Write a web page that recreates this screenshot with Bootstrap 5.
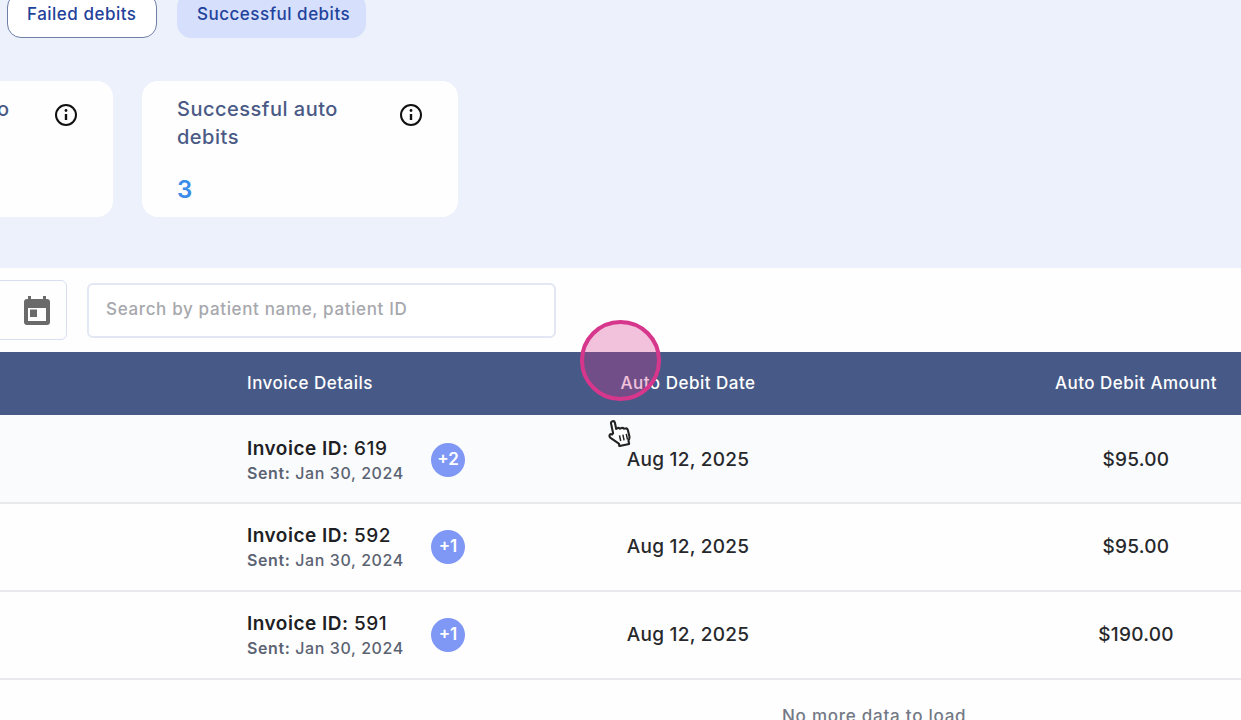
<!DOCTYPE html>
<html lang="en">
<head>
    <meta charset="UTF-8">
    <title>Auto debits</title>
    <link href="https://cdn.jsdelivr.net/npm/bootstrap@5.3.3/dist/css/bootstrap.min.css" rel="stylesheet">
    <style>
        html, body { height: 720px; overflow: hidden; }
        body { background: #fefefe; font-family: Inter, "Open Sans", sans-serif; font-weight: 500; }

        .top-band { height: 268px; background: #ecf1fc; overflow: hidden; }
        .tab-row { margin: -7px 0 0 7px; gap: 20px; }
        .debit-tab { height: 45px; padding: 0 19px; font-size: 17px; letter-spacing: .5px; font-weight: 500; color: #1f429b; border-radius: 14px; line-height: 40px; white-space: nowrap; }
        .tab-outline { width: 150px; background: #fff; border: 1.5px solid #6f7fa6; }
        .tab-filled { width: 189px; background: #d6dffb; border: 1px solid #d6dffb; }
        .stat-row { margin: 43px 0 0 -212px; gap: 29px; }
        .stat-box { height: 136px; border: 0; border-radius: 16px; background: #fefefe; padding: 14px 35px; }
        .stat-wide { width: 325px; }
        .stat-normal { width: 316px; }
        .stat-title { width: 190px; font-size: 20px; letter-spacing: .5px; line-height: 28px; color: #4a5a85; }
        .stat-value { margin-top: 24px; font-size: 24px; line-height: 30px; font-weight: 600; color: #3a8de8; }
        .info-icon { position: absolute; top: 22px; right: 35px; }

        .filter-row { height: 84px; gap: 20px; margin-left: -100px; }
        .date-box { width: 167px; height: 60px; border: 1px solid #d8dff1; border-radius: 6px; padding-right: 16px; }
        .search-box { width: 469px; height: 55px; border: 2px solid #e3e6f3; border-radius: 6px; padding: 0 17px 2px; font-size: 17px; letter-spacing: .65px; font-weight: 500; color: #333; }
        .search-box::placeholder { color: #a6a8ad; }

        .debit-table { width: 1241px; table-layout: fixed; margin: 0; --bs-table-bg: transparent; }
        .debit-table th { height: 63px; background: #475a87; color: #fff; font-size: 17px; letter-spacing: .5px; font-weight: 500; vertical-align: middle; border: 0; padding: 0; }
        .debit-table td { height: 88px; vertical-align: middle; border-bottom: 2px solid #e8e9ec; padding: 0; color: #27282c; font-size: 19px; letter-spacing: .25px; }
        .col-skip { width: 247px; }
        .col-invoice { width: 333px; }
        .col-date { width: 216px; }
        .col-gap { width: 235px; }
        .col-amount { width: 210px; }
        .debit-table .row-first td { padding-top: 2px; background: #fafbfd; }
        .debit-table .row-next td { padding-bottom: 1px; }
        .debit-table .row-first .value-cell { padding-top: 4px; }
        .debit-table .row-next .value-cell { padding-top: 1px; padding-bottom: 0; }
        .amount-text { letter-spacing: .5px; }
        .debit-table .invoice-id { font-size: 19px; line-height: 26px; letter-spacing: .5px; color: #1e1f24; }
        .invoice-id b { font-weight: 600; }
        .debit-table .invoice-sent { font-size: 16px; line-height: 22px; letter-spacing: .6px; color: #5b6372; }
        .invoice-sent b { font-weight: 600; }
        .debit-table .more-pill { width: 34px; height: 34px; margin-left: 27px; border-radius: 50%; background: #7f97f5; color: #fff; font-size: 17px; letter-spacing: 0; font-weight: 600; }
        .invoice-text { width: 157px; white-space: nowrap; }
        .end-note { margin: 25px 0 0 782px; font-size: 17px; letter-spacing: .75px; line-height: 22px; color: #737985; white-space: nowrap; }

        .click-ring { position: absolute; left: 580px; top: 320px; width: 81px; height: 81px; border-radius: 50%; border: 4px solid #d6368b; background: rgba(214, 54, 139, .3); }
        .hand-cursor { position: absolute; left: 605px; top: 418px; filter: blur(.4px); }
    </style>
</head>
<body>

<!-- Tabs and summary -->
<div class="top-band">
    <div class="d-flex tab-row">
        <div class="debit-tab tab-outline">Failed debits</div>
        <div class="debit-tab tab-filled">Successful debits</div>
    </div>
    <div class="d-flex stat-row">
        <div class="card stat-box stat-wide position-relative">
            <div class="stat-title">Unsuccessful auto debits</div>
            <svg class="info-icon" width="24" height="24" viewBox="0 0 24 24" fill="none" stroke="#111" stroke-width="2"><circle cx="12" cy="12" r="10"/><path d="M12 11v6" stroke-width="2.4"/><circle cx="12" cy="7.500" r="1.400" fill="#111" stroke="none"/></svg>
        </div>
        <div class="card stat-box stat-normal position-relative">
            <div class="stat-title">Successful auto debits</div>
            <div class="stat-value">3</div>
            <svg class="info-icon" width="24" height="24" viewBox="0 0 24 24" fill="none" stroke="#111" stroke-width="2"><circle cx="12" cy="12" r="10"/><path d="M12 11v6" stroke-width="2.4"/><circle cx="12" cy="7.500" r="1.400" fill="#111" stroke="none"/></svg>
        </div>
    </div>
</div>

<!-- Filters -->
<div class="d-flex align-items-center filter-row">
    <div class="date-box d-flex align-items-center justify-content-end flex-shrink-0">
        <svg width="26" height="29" viewBox="0 0 26 29" fill="#6a6a6a"><path fill-rule="evenodd" d="M4 0h3v3h12V0h3v3h1a3 3 0 0 1 3 3v20a3 3 0 0 1-3 3H3a3 3 0 0 1-3-3V6a3 3 0 0 1 3-3h1zM4 12v13h18V12z"/><rect x="6" y="13.500" width="7" height="7.500"/></svg>
    </div>
    <input type="text" class="form-control search-box flex-shrink-0" placeholder="Search by patient name, patient ID">
</div>

<!-- Invoices -->
<table class="table debit-table">
    <colgroup>
        <col class="col-skip"><col class="col-invoice"><col class="col-date"><col class="col-gap"><col class="col-amount">
    </colgroup>
    <thead>
    <tr>
        <th></th>
        <th>Invoice Details</th>
        <th class="text-center">Auto Debit Date</th>
        <th></th>
        <th class="text-center">Auto Debit Amount</th>
    </tr>
    </thead>
    <tbody>
    <tr class="row-first">
        <td></td>
        <td>
            <div class="d-flex align-items-center">
                <div class="invoice-text">
                    <div class="invoice-id"><b>Invoice ID:</b> 619</div>
                    <div class="invoice-sent"><b>Sent:</b> Jan 30, 2024</div>
                </div>
                <div class="more-pill d-flex align-items-center justify-content-center">+2</div>
            </div>
        </td>
        <td class="text-center value-cell">Aug 12, 2025</td>
        <td></td>
        <td class="text-center value-cell amount-text">$95.00</td>
    </tr>
    <tr class="row-next">
        <td></td>
        <td>
            <div class="d-flex align-items-center">
                <div class="invoice-text">
                    <div class="invoice-id"><b>Invoice ID:</b> 592</div>
                    <div class="invoice-sent"><b>Sent:</b> Jan 30, 2024</div>
                </div>
                <div class="more-pill d-flex align-items-center justify-content-center">+1</div>
            </div>
        </td>
        <td class="text-center value-cell">Aug 12, 2025</td>
        <td></td>
        <td class="text-center value-cell amount-text">$95.00</td>
    </tr>
    <tr class="row-next">
        <td></td>
        <td>
            <div class="d-flex align-items-center">
                <div class="invoice-text">
                    <div class="invoice-id"><b>Invoice ID:</b> 591</div>
                    <div class="invoice-sent"><b>Sent:</b> Jan 30, 2024</div>
                </div>
                <div class="more-pill d-flex align-items-center justify-content-center">+1</div>
            </div>
        </td>
        <td class="text-center value-cell">Aug 12, 2025</td>
        <td></td>
        <td class="text-center value-cell amount-text">$190.00</td>
    </tr>
    </tbody>
</table>
<div class="end-note">No more data to load</div>

<!-- Click highlight and pointer from the recording -->
<div class="click-ring"></div>
<svg class="hand-cursor" width="28" height="29" viewBox="0 0 24 25" fill="#fff" stroke="#222" stroke-width="1.800" stroke-linejoin="round"><g transform="rotate(-12 12 13)"><path d="M7 12V3.500a1.700 1.700 0 0 1 3.400 0V9l1-.3a1.600 1.600 0 0 1 2 .7l1.600-.2a1.600 1.600 0 0 1 1.800 1l1.400 0a1.800 1.800 0 0 1 1.800 1.600l.2 5.200a6 6 0 0 1-1.600 4.200V24H10v-2.200L4 15.500c-1.600-1.900 .4-3.900 2-2.500z"/><path d="M12 15v5M15 15v5M18 15v5" stroke-width="1.300" fill="none"/></g></svg>

<script src="https://cdn.jsdelivr.net/npm/bootstrap@5.3.3/dist/js/bootstrap.bundle.min.js"></script>
</body>
</html>
